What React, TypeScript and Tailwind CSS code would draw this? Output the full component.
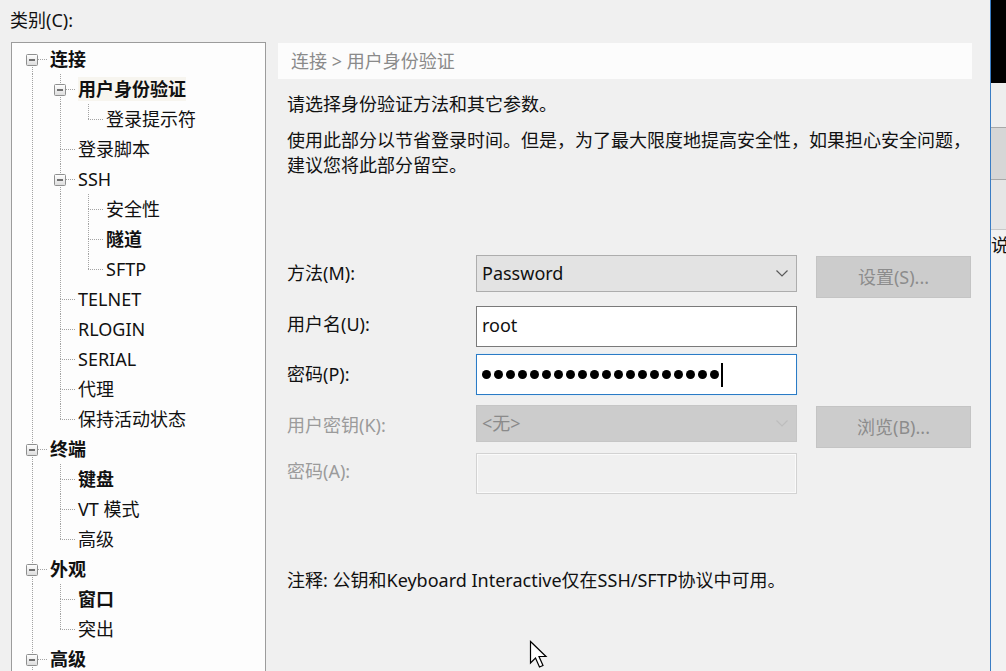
import React from "react";

type Node = { t: string; b?: boolean; sel?: boolean; c?: Node[] };

const tree: Node[] = [
  {
    t: "连接",
    b: true,
    c: [
      { t: "用户身份验证", b: true, sel: true, c: [{ t: "登录提示符" }] },
      { t: "登录脚本" },
      { t: "SSH", c: [{ t: "安全性" }, { t: "隧道", b: true }, { t: "SFTP" }] },
      { t: "TELNET" },
      { t: "RLOGIN" },
      { t: "SERIAL" },
      { t: "代理" },
      { t: "保持活动状态" },
    ],
  },
  { t: "终端", b: true, c: [{ t: "键盘", b: true }, { t: "VT 模式" }, { t: "高级" }] },
  { t: "外观", b: true, c: [{ t: "窗口", b: true }, { t: "突出" }] },
  { t: "高级", b: true, c: [] },
];

type Row = {
  t: string;
  b?: boolean;
  sel?: boolean;
  level: number;
  last: boolean;
  first: boolean;
  box: boolean;
  cont: boolean[];
};

function flatten(nodes: Node[], level: number, cont: boolean[], out: Row[], rootMore: boolean) {
  nodes.forEach((n, i) => {
    const last = level === 0 ? (rootMore ? false : i === nodes.length - 1) : i === nodes.length - 1;
    out.push({
      t: n.t,
      b: n.b,
      sel: n.sel,
      level,
      last,
      first: level === 0 && i === 0,
      box: !!n.c,
      cont: [...cont],
    });
    if (n.c && n.c.length) flatten(n.c, level + 1, [...cont, !last], out, rootMore);
  });
}

const rows: Row[] = [];
flatten(tree, 0, [], rows, true);

const LINE = "#a3a3a3";

function Cell({ kind, row }: { kind: "cont" | "empty" | "own"; row?: Row }) {
  return (
    <svg width="28" height="30" className="shrink-0" style={{ overflow: "visible" }}>
      {kind === "cont" && <line x1="14.5" y1="0" x2="14.5" y2="30" stroke={LINE} strokeDasharray="1 1" />}
      {kind === "own" && row && (
        <>
          {!row.first && <line x1="14.5" y1="0" x2="14.5" y2="15" stroke={LINE} strokeDasharray="1 1" />}
          {!row.last && <line x1="14.5" y1="15" x2="14.5" y2="30" stroke={LINE} strokeDasharray="1 1" />}
          <line x1="14" y1="15.5" x2="30" y2="15.5" stroke={LINE} strokeDasharray="1 1" />
          {row.box && (
            <>
              <defs>
                <linearGradient id="bx" x1="0" y1="0" x2="0" y2="1">
                  <stop offset="0" stopColor="#ffffff" />
                  <stop offset="1" stopColor="#dcdcdc" />
                </linearGradient>
              </defs>
              <rect x="8.5" y="10.5" width="11" height="11" rx="1" fill="url(#bx)" stroke="#8e8f8f" />
              <line x1="11" y1="16" x2="17" y2="16" stroke="#3a3a3a" strokeWidth="1.4" />
            </>
          )}
        </>
      )}
    </svg>
  );
}

function TreeRow({ row }: { row: Row }) {
  const cells = [];
  for (let i = 0; i < row.level; i++) {
    cells.push(<Cell key={i} kind={row.cont[i] ? "cont" : "empty"} />);
  }
  cells.push(<Cell key="own" kind="own" row={row} />);
  return (
    <div className="flex h-[30px] items-center">
      {cells}
      <span
        className={
          "ml-[4px] whitespace-nowrap leading-[24px] text-[#111] " +
          (row.b ? "font-bold " : "") +
          (row.sel ? "bg-[#f7f5ef]" : "")
        }
      >
        {row.t}
      </span>
    </div>
  );
}

function Chevron({ color }: { color: string }) {
  return (
    <svg width="12" height="7" viewBox="0 0 12 7">
      <polyline points="0.5,0.5 6,6 11.5,0.5" fill="none" stroke={color} strokeWidth="1.2" />
    </svg>
  );
}

export default function App() {
  return (
    <div className="relative flex h-[671px] w-[1006px] overflow-hidden bg-[#f0f0f0] font-['Noto_Sans','Noto_Sans_CJK_SC',sans-serif] text-[18px] text-[#111]">
      <div className="flex w-[990px] shrink-0 flex-col">
        <div className="h-[42px] shrink-0 pl-[10px] pt-[8px] leading-[24px]">类别(C):</div>
        <div className="flex flex-1">
          {/* tree */}
          <div className="ml-[11px] h-[700px] w-[255px] shrink-0 border border-[#9c9c9c] bg-[#fdfdfd] pl-[6px] pt-[1px]">
            {rows.map((r, i) => (
              <TreeRow key={i} row={r} />
            ))}
          </div>
          {/* right panel */}
          <div className="ml-[12px] flex w-[712px] flex-col">
            <div className="mt-[1px] flex h-[36px] w-[694px] items-center bg-[#fcfcfc] pl-[13px] text-[#8a8a8a]">
              连接 &gt; 用户身份验证
            </div>
            <div className="mt-[13px] h-[24px] pl-[9px] leading-[24px]">请选择身份验证方法和其它参数。</div>
            <div className="mt-[12px] whitespace-nowrap pl-[9px] leading-[25px]">
              使用此部分以节省登录时间。但是，为了最大限度地提高安全性，如果担心安全问题，
              <br />
              建议您将此部分留空。
            </div>

            {/* row 1 */}
            <div className="mt-[77px] flex h-[43px] items-start pl-[9px]">
              <div className="flex h-[37px] w-[189px] items-center">方法(M):</div>
              <div className="flex h-[37px] w-[321px] items-center justify-between border border-[#adadad] bg-[#e3e3e3] pl-[5px] pr-[8px]">
                <span>Password</span>
                <Chevron color="#5a5a5a" />
              </div>
              <div className="ml-[19px] mt-[1px] flex h-[42px] w-[155px] items-center justify-center border border-[#c4c4c4] bg-[#cccccc] text-[#8c8c8c]">
                设置(S)...
              </div>
            </div>

            {/* row 2 */}
            <div className="mt-[8px] flex h-[41px] items-start pl-[9px]">
              <div className="flex h-[36px] w-[189px] items-center">用户名(U):</div>
              <div className="flex h-[41px] w-[321px] items-center border border-[#7a7a7a] bg-white pb-[3px] pl-[5px]">
                root
              </div>
            </div>

            {/* row 3 */}
            <div className="mt-[7px] flex h-[41px] items-start pl-[9px]">
              <div className="flex h-[40px] w-[189px] items-center">密码(P):</div>
              <div className="flex h-[41px] w-[321px] items-center border border-[#2a7bc6] bg-white pl-[5px] shadow-[0_0_2px_#cde6f7]">
                <div className="flex gap-[3px]">
                  {Array.from({ length: 20 }).map((_, i) => (
                    <span key={i} className="h-[9px] w-[9px] rounded-full bg-black" />
                  ))}
                </div>
                <span className="ml-[2px] h-[24px] w-[2px] bg-black" />
              </div>
            </div>

            {/* row 4 */}
            <div className="mt-[10px] flex h-[43px] items-start pl-[9px] text-[#9b9b9b]">
              <div className="flex h-[40px] w-[189px] items-center">用户密钥(K):</div>
              <div className="flex h-[37px] w-[321px] items-center justify-between border border-[#c6c6c6] bg-[#cccccc] pl-[5px] pr-[8px] text-[#8a8a8a]">
                <span>&lt;无&gt;</span>
                <Chevron color="#bdbdbd" />
              </div>
              <div className="ml-[19px] mt-[1px] flex h-[42px] w-[155px] items-center justify-center border border-[#c4c4c4] bg-[#cccccc] text-[#8c8c8c]">
                浏览(B)...
              </div>
            </div>

            {/* row 5 */}
            <div className="mt-[5px] flex h-[41px] items-start pl-[9px] text-[#9b9b9b]">
              <div className="flex h-[37px] w-[189px] items-center">密码(A):</div>
              <div className="h-[41px] w-[321px] border border-[#d2d2d2] bg-[#f0f0f0] shadow-[inset_0_0_0_1px_#fafafa]" />
            </div>

            <div className="mt-[74px] h-[24px] whitespace-nowrap pl-[9px] leading-[24px]">
              注释: 公钥和Keyboard Interactive仅在SSH/SFTP协议中可用。
            </div>
          </div>
        </div>
      </div>

      {/* window edge */}
      <div className="w-[1px] shrink-0 bg-[#3a7dc4]" />
      <div className="flex flex-1 flex-col overflow-hidden">
        <div className="h-[83px] bg-black" />
        <div className="h-[45px] border-b border-[#a8a8a8] bg-[#eeeeee]" />
        <div className="h-[52px] border-b border-[#a8a8a8] bg-[#d6d6d6]" />
        <div className="h-[50px] border-b border-[#c8c8c8] bg-[#e6e6e6]" />
        <div className="flex-1 overflow-hidden bg-[#f2f2f2] pt-[3px] text-[18px] leading-[24px]">说</div>
      </div>

      {/* mouse cursor */}
      <svg className="absolute left-[529px] top-[640px]" width="22" height="30" viewBox="0 0 22 30">
        <path
          d="M1.5 1.5 L1.5 23 L6.5 18 L10.5 27 L14 25.5 L10 16.5 L17 16.5 Z"
          fill="#ffffff"
          stroke="#000000"
          strokeWidth="1.2"
          strokeLinejoin="miter"
        />
      </svg>
    </div>
  );
}
